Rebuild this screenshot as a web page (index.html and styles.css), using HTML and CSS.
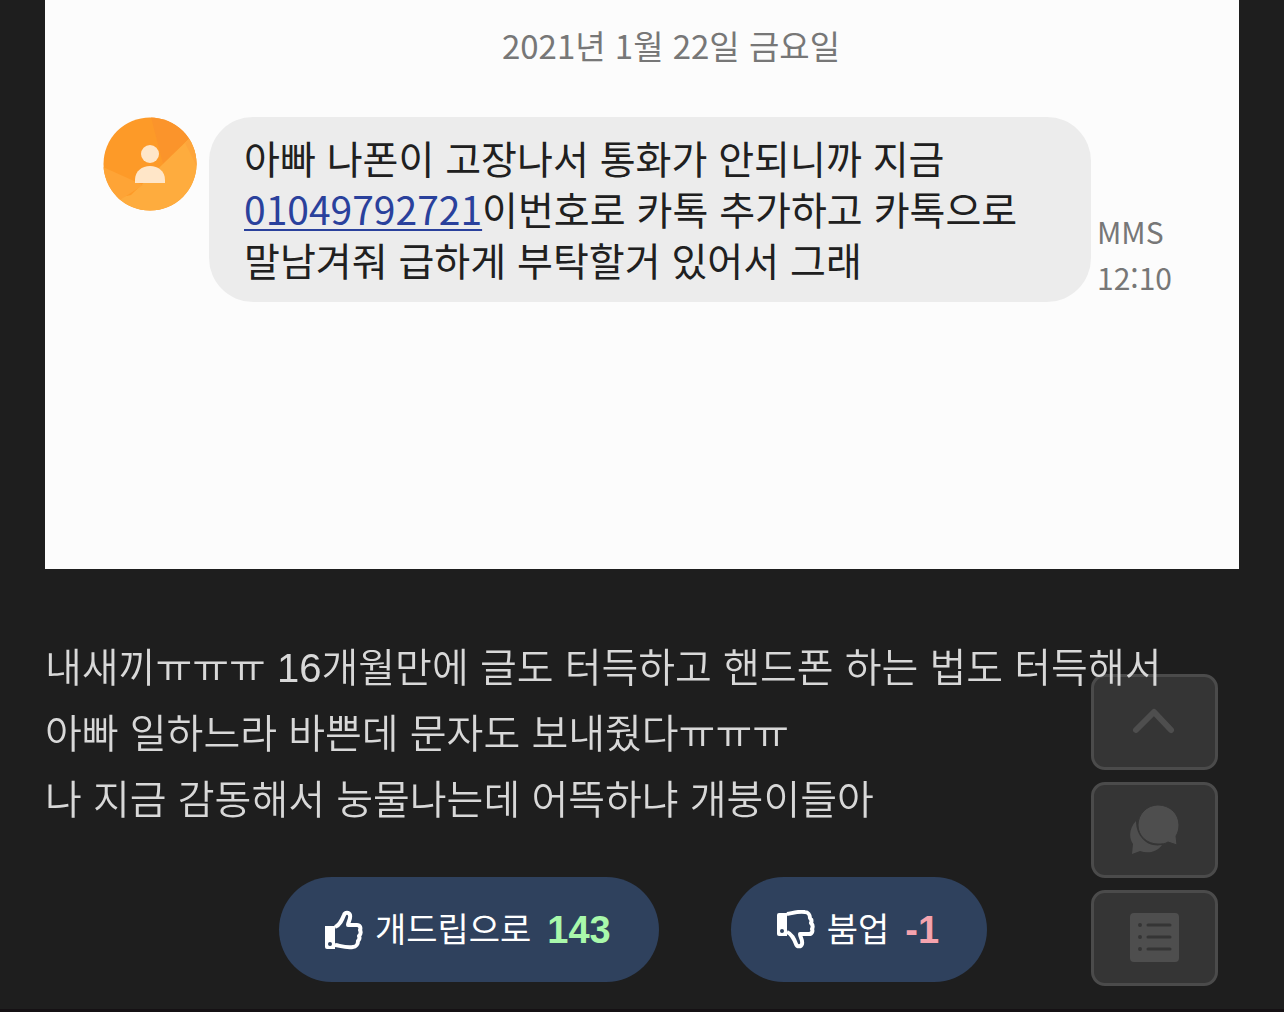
FILE: index.html
```html
<!DOCTYPE html>
<html lang="ko">

<head>
    <meta charset="UTF-8">
    <meta name="viewport" content="width=device-width, initial-scale=1.0">
    <title>개드립</title>
    <link rel="stylesheet" href="styles.css">
</head>

<body>

    <main class="post">
        <!-- Text message -->
        <section class="message-card">
            <p class="message-date">2021년 1월 22일 금요일</p>
            <div class="message-row">
                <svg class="avatar" viewBox="0 0 94 94" aria-hidden="true">
                    <defs>
                        <clipPath id="avatar-clip"><circle cx="47" cy="47" r="46.5" /></clipPath>
                    </defs>
                    <g clip-path="url(#avatar-clip)">
                        <rect width="94" height="94" fill="#fd9a28" />
                        <path d="M48 0h46v14L60 47z" fill="#fb942b" />
                        <path d="M94 14v80H0V84l28-6z" fill="#feac3e" />
                        <path d="M82 26l12 24V14z" fill="#fda53c" />
                        <path d="M0 50l40 18L0 94z" fill="#fea436" />
                    </g>
                    <circle cx="47" cy="37" r="9" fill="#ffe6c8" />
                    <path d="M32 66v-3c0-9 7-14 15-14s15 5 15 14v3z" fill="#ffe6c8" />
                </svg>
                <p class="bubble">아빠 나폰이 고장나서 통화가 안되니까 지금<br><a href="tel:01049792721">01049792721</a>이번호로 카톡 추가하고 카톡으로<br>말남겨줘 급하게 부탁할거 있어서 그래</p>
                <div class="message-info">
                    <span>MMS</span>
                    <time>12:10</time>
                </div>
            </div>
        </section>

        <!-- Post text -->
        <p class="post-text">내새끼ㅠㅠㅠ <span class="number">16</span>개월만에 글도 터득하고 핸드폰 하는 법도 터득해서<br>아빠 일하느라 바쁜데 문자도 보내줬다ㅠㅠㅠ<br>나 지금 감동해서 눙물나는데 어뜩하냐 개붕이들아</p>

        <!-- Votes -->
        <div class="votes">
            <button type="button" class="vote-button">
                <svg class="vote-icon" viewBox="0 0 38 40" aria-hidden="true">
                    <path d="M0 16h10v23H2q-2 0-2-2z" fill="#fff" />
                    <circle cx="5" cy="34" r="2" fill="#2f415d" />
                    <path d="M10 17c5-2 7-7 9-12 1-3 5-3 6 0 1 4-2 7-2 10h9c3 0 4 3 3 5 1 2 1 4-1 6 1 2 0 4-1 5 0 3-2 6-5 6-7 1-12-1-18-2" fill="none" stroke="#fff" stroke-width="4" stroke-linejoin="round" />
                </svg>
                <span>개드립으로</span>
                <strong class="count-up">143</strong>
            </button>
            <button type="button" class="vote-button">
                <svg class="vote-icon" viewBox="0 0 38 40" aria-hidden="true">
                    <path d="M2 3h8v23H2q-2 0-2-2V5q0-2 2-2z" fill="#fff" />
                    <circle cx="5" cy="21" r="2" fill="#2f415d" />
                    <path d="M10 4c6-1 11-3 18-2 3 0 5 3 5 6 1 1 2 3 1 5 2 2 2 4 1 6 1 2 0 5-3 5h-9c0 3 3 6 2 10-1 3-5 3-6 0-2-5-4-10-9-12" fill="none" stroke="#fff" stroke-width="4" stroke-linejoin="round" />
                </svg>
                <span>붐업</span>
                <strong class="count-down">-1</strong>
            </button>
        </div>
    </main>

    <!-- Floating shortcuts -->
    <nav class="shortcuts">
        <button type="button" class="shortcut" aria-label="맨 위로">
            <svg viewBox="0 0 50 50" aria-hidden="true">
                <path d="M6 33L24 15l17 18" fill="none" stroke="currentColor" stroke-width="6" stroke-linecap="round" stroke-linejoin="round" />
            </svg>
        </button>
        <button type="button" class="shortcut" aria-label="댓글">
            <svg viewBox="0 0 50 50" aria-hidden="true">
                <path d="M6 16C0 22-2 32 3 39l-1 10 8-3c8 3 17 1 22-6C18 43 6 32 6 16z" fill="currentColor" />
                <path d="M28 0C40 0 49 9 49 20c0 4-1 8-3 11l1 9-9-3c-3 2-6 2-10 2C17 39 8 31 8 20S17 0 28 0z" fill="currentColor" stroke="#353535" stroke-width="1" />
            </svg>
        </button>
        <button type="button" class="shortcut" aria-label="목록">
            <svg viewBox="0 0 50 50" aria-hidden="true">
                <rect x="0" y="0" width="49" height="49" rx="4" fill="currentColor" />
                <path d="M18 12h22M18 24h22M18 36h22" stroke="#353535" stroke-width="3" stroke-linecap="round" />
                <path d="M10 12h0M10 24h0M10 36h0" stroke="#353535" stroke-width="4" stroke-linecap="round" />
            </svg>
        </button>
    </nav>

</body>
</html>
```

FILE: styles.css
```css
body {
    margin: 0;
    font-family: "Noto Sans CJK KR", sans-serif;
    background-color: #1e1e1e;
    color: #d8d8d8;
}

p {
    margin: 0;
}

.post {
    padding: 0 45px 27px;
    border-bottom: 3px solid #151114;
}

/* Text message */
.message-card {
    box-sizing: border-box;
    min-height: 569px;
    padding: 20px 58px;
    background-color: #fcfcfc;
}

.message-date {
    padding-left: 58px;
    font-size: 33px;
    line-height: 50px;
    text-align: center;
    color: #777777;
}

.message-row {
    display: flex;
    margin-top: 47px;
}

.avatar {
    flex: none;
    width: 94px;
    height: 94px;
    margin-right: 12px;
}

.bubble {
    flex: 0 1 812px;
    padding: 15px 35px 17px;
    font-size: 39px;
    line-height: 51px;
    color: #202020;
    background-color: #ececec;
    border-radius: 44px;
}

.bubble a {
    color: #2a419c;
    text-decoration-thickness: 2px;
    text-underline-offset: 4px;
}

.message-info {
    display: flex;
    flex-direction: column;
    align-self: flex-end;
    margin-bottom: 2px;
    margin-left: 6px;
    font-size: 30px;
    line-height: 46px;
    color: #777777;
}

/* Post text, stays readable over the shortcuts */
.post-text {
    position: relative;
    z-index: 1;
    margin-top: 63px;
    font-size: 40px;
    font-weight: 350;
    line-height: 66px;
    pointer-events: none;
}

.number {
    font-family: "Liberation Sans", sans-serif;
    line-height: 1;
}

/* Votes */
.votes {
    display: flex;
    justify-content: center;
    gap: 72px;
    margin-top: 47px;
    padding-right: 18px;
}

.vote-button {
    display: flex;
    align-items: center;
    height: 105px;
    padding: 0 48px 0 46px;
    border: none;
    border-radius: 53px;
    background-color: #2f415d;
    color: white;
    font-family: "Noto Sans CJK KR", sans-serif;
    font-size: 34px;
    line-height: 50px;
}

.vote-icon {
    width: 38px;
    height: 40px;
    margin-right: 12px;
}

.vote-button span {
    padding-bottom: 4px;
}

.vote-button strong {
    margin-left: 16px;
    font-family: "Liberation Sans", sans-serif;
    font-size: 38px;
}

.count-up {
    color: #a9f8ab;
}

.count-down {
    color: #f5a3ae;
}

/* Floating shortcuts */
.shortcuts {
    position: fixed;
    right: 66px;
    bottom: 26px;
    display: flex;
    flex-direction: column;
    gap: 12px;
}

.shortcut {
    display: flex;
    align-items: center;
    justify-content: center;
    width: 127px;
    height: 96px;
    padding: 0;
    border: 3px solid #4b4b4b;
    border-radius: 14px;
    background-color: #353535;
    color: #4e4e4e;
}

.shortcut svg {
    width: 50px;
    height: 50px;
}
```
